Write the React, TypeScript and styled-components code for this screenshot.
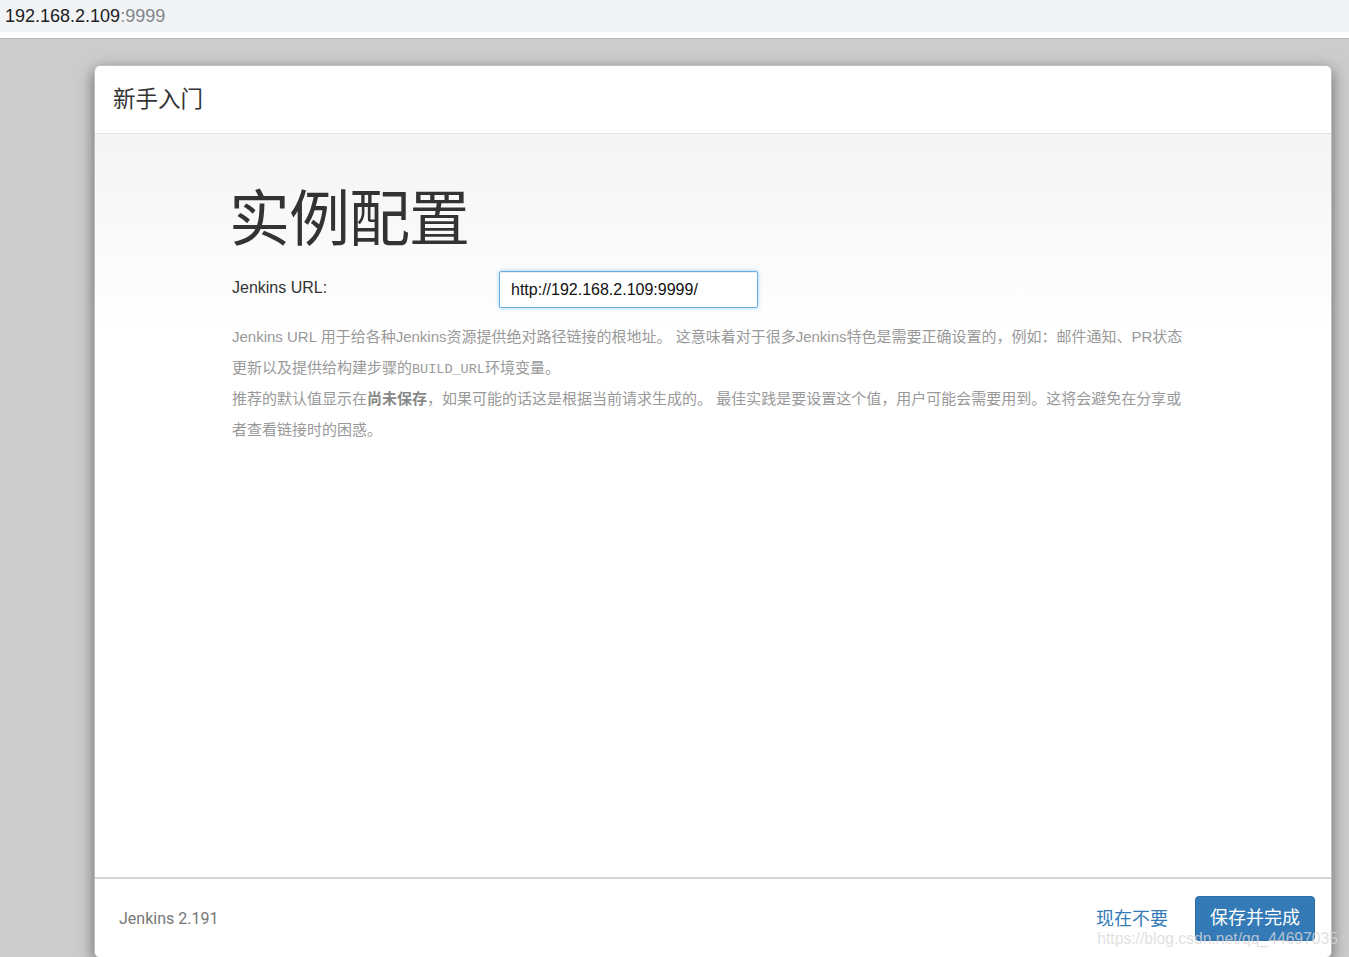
import styled, { createGlobalStyle } from "styled-components";

const GlobalStyle = createGlobalStyle`
  html, body {
    margin: 0;
    padding: 0;
    height: 100%;
    overflow: hidden;
  }
  body {
    font-family: "Liberation Sans", Arial, "Noto Sans CJK SC", sans-serif;
    background: #cccccc;
  }
`;

const cjk = `"Liberation Sans", Arial, "Noto Sans CJK SC", sans-serif`;

const App = () => {
  return (
    <Page>
      <GlobalStyle />
      <AddressBar>
        <Host>192.168.2.109</Host>
        <Port>:9999</Port>
      </AddressBar>
      <Backdrop>
        <Modal>
          <ModalHeader>新手入门</ModalHeader>
          <ModalBody>
            <Content>
              <Title>实例配置</Title>
              <FormRow>
                <Label>Jenkins URL:</Label>
                <UrlInput defaultValue="http://192.168.2.109:9999/" />
              </FormRow>
              <Help>
                Jenkins URL 用于给各种Jenkins资源提供绝对路径链接的根地址。 这意味着对于很多Jenkins特色是需要正确设置的，例如：邮件通知、PR状态更新以及提供给构建步骤的<Code>BUILD_URL</Code>环境变量。
              </Help>
              <Help>
                推荐的默认值显示在<strong>尚未保存</strong>，如果可能的话这是根据当前请求生成的。 最佳实践是要设置这个值，用户可能会需要用到。这将会避免在分享或者查看链接时的困惑。
              </Help>
            </Content>
          </ModalBody>
          <ModalFooter>
            <Version>Jenkins 2.191</Version>
            <Actions>
              <SkipLink>现在不要</SkipLink>
              <PrimaryButton>保存并完成</PrimaryButton>
            </Actions>
          </ModalFooter>
        </Modal>
      </Backdrop>
      <Watermark>https://blog.csdn.net/qq_44697035</Watermark>
    </Page>
  );
};

export default App;

const Page = styled.div`
  display: flex;
  flex-direction: column;
  height: 100vh;
  position: relative;
`;

const AddressBar = styled.div`
  height: 32px;
  background: #f1f3f4;
  display: flex;
  align-items: center;
  padding-left: 5px;
  font-size: 18px;
  border-bottom: 6px solid #ffffff;
  box-shadow: 0 1px 0 #b8b8b8;
  flex-shrink: 0;
`;

const Host = styled.span`
  color: #202124;
`;

const Port = styled.span`
  color: #80868b;
`;

const Backdrop = styled.div`
  flex: 1;
  display: flex;
  padding: 26px 17px 0 94px;
  margin-top: 1px;
  min-height: 0;
`;

const Modal = styled.div`
  flex: 1;
  display: flex;
  flex-direction: column;
  background: #ffffff;
  border: 1px solid rgba(0, 0, 0, 0.25);
  border-radius: 6px;
  box-shadow: 0 5px 15px rgba(0, 0, 0, 0.5);
  height: 891px;
  overflow: hidden;
`;

const ModalHeader = styled.div`
  height: 61px;
  display: flex;
  align-items: center;
  padding: 0 0 6px 18px;
  font-family: ${cjk};
  font-size: 22.5px;
  color: #333333;
  border-bottom: 1px solid #e5e5e5;
  flex-shrink: 0;
`;

const ModalBody = styled.div`
  flex: 1;
  background: linear-gradient(to bottom, #f4f4f4 0px, #ffffff 200px);
`;

const Content = styled.div`
  padding: 46px 0 0 137px;
  width: 958px;
`;

const Title = styled.h1`
  margin: 2px 0 13px -3px;
  font-family: ${cjk};
  font-weight: normal;
  font-size: 61px;
  line-height: 76px;
  color: #333333;
  letter-spacing: -1px;
`;

const FormRow = styled.div`
  display: flex;
  align-items: center;
  margin-bottom: 13px;
`;

const Label = styled.label`
  width: 267px;
  font-size: 16px;
  color: #333333;
  margin-top: -4px;
`;

const UrlInput = styled.input`
  box-sizing: border-box;
  width: 259px;
  height: 37px;
  padding: 0 11px;
  font-family: "Liberation Sans", Arial, sans-serif;
  font-size: 16px;
  color: #111111;
  border: 1px solid #66afe9;
  border-radius: 2px;
  outline: none;
  box-shadow: inset 0 1px 1px rgba(0, 0, 0, 0.075), 0 0 4px rgba(102, 175, 233, 0.6);
`;

const Help = styled.p`
  margin: 0;
  font-family: ${cjk};
  font-size: 15px;
  line-height: 31px;
  color: #999999;

  strong {
    color: #888888;
  }
`;

const Code = styled.code`
  font-family: "Liberation Mono", "Courier New", monospace;
  font-size: 13.5px;
  line-height: 1;
`;

const ModalFooter = styled.div`
  height: 78px;
  flex-shrink: 0;
  border-top: 2px solid #d5d5d5;
  display: flex;
  align-items: center;
  justify-content: space-between;
  padding: 0 16px 0 24px;
  background: #ffffff;
`;

const Version = styled.span`
  font-family: Roboto, "Liberation Sans", sans-serif;
  font-size: 16px;
  color: #777777;
  margin-top: 1px;
`;

const Actions = styled.div`
  display: flex;
  align-items: center;
  gap: 27px;
`;

const SkipLink = styled.a`
  font-family: ${cjk};
  font-size: 18px;
  color: #337ab7;
  cursor: pointer;
  margin-top: -2px;
`;

const PrimaryButton = styled.button`
  width: 120px;
  height: 45px;
  padding: 0 0 4px;
  background: #337ab7;
  border: 1px solid #2e6da4;
  border-radius: 4px;
  color: #ffffff;
  font-family: ${cjk};
  font-size: 18px;
`;

const Watermark = styled.div`
  position: absolute;
  right: 11px;
  bottom: 9px;
  font-family: "Liberation Sans", Arial, sans-serif;
  font-size: 15.7px;
  color: rgba(215, 215, 215, 0.8);
  pointer-events: none;
`;
